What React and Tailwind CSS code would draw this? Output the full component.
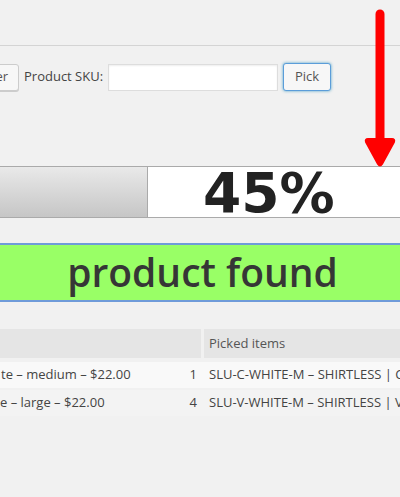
export default function App() {
  const font = { fontFamily: '"Open Sans", "Noto Sans", sans-serif' };
  return (
    <div className="relative w-[400px] h-[497px] overflow-hidden bg-[#f1f1f1] text-[#444]" style={font}>
      <div className="h-[46px] border-b border-[#d4d4d4]"></div>
      <div className="flex items-center h-[30px] mt-[16px] ml-[-39px]">
        <button className="h-[27px] px-[10px] rounded-[3px] border border-[#cccccc] bg-[#f7f7f7] text-[13px] text-[#555] shadow-[0_1px_0_#ccc]">Order</button>
        <span className="ml-[5px] text-[13px] text-[#444]">Product SKU:</span>
        <input className="ml-[5px] w-[170px] h-[27px] bg-white border border-[#dddddd] shadow-[inset_0_1px_2px_rgba(0,0,0,0.07)] outline-none" />
        <button className="ml-[5px] h-[28px] w-[48px] rounded-[3px] border border-[#5b9dd9] bg-[#f7f7f7] text-[13px] text-[#555] shadow-[0_0_3px_rgba(30,140,190,0.8)]">Pick</button>
      </div>
      <div className="mt-[74px] flex h-[52px] border-y border-[#aaaaaa]">
        <div className="w-[148px] border-r border-[#aaaaaa] bg-gradient-to-b from-[#e9e9e9] to-[#c6c6c6]"></div>
        <div className="flex-1 bg-white flex items-center pl-[55px]">
          <span className="text-[55px] font-bold leading-none text-[#222] mt-[2px]" style={{ fontFamily: '"DejaVu Sans", Verdana, sans-serif' }}>45%</span>
        </div>
      </div>
      <div className="mt-[25px] h-[59px] border-y-2 border-[#6f9bd9] bg-[#99ff66] flex items-center justify-center">
        <span className="text-[39px] font-semibold leading-none text-[#363636] mt-[-3px] ml-[5px]">product found</span>
      </div>
      <div className="mt-[27px] text-[13px]">
        <div className="flex h-[29px] gap-[3px]">
          <div className="w-[201px] bg-[#e5e5e5]"></div>
          <div className="flex-1 bg-[#e5e5e5] flex items-center pl-[5px] text-[#555] whitespace-nowrap">Picked items</div>
        </div>
        <div className="flex h-[26px] gap-[3px] mt-[4px] bg-[#f9f9f9]">
          <div className="w-[201px] flex items-center justify-between pr-[4px] whitespace-nowrap overflow-hidden">
            <span className="ml-[1px]">te – medium – $22.00</span>
            <span>1</span>
          </div>
          <div className="flex-1 flex items-center pl-[5px] whitespace-nowrap overflow-hidden">SLU-C-WHITE-M – SHIRTLESS | Crew</div>
        </div>
        <div className="flex h-[26px] gap-[3px] mt-[2px] bg-[#f3f3f3]">
          <div className="w-[201px] flex items-center justify-between pr-[4px] whitespace-nowrap overflow-hidden">
            <span>e – large – $22.00</span>
            <span>4</span>
          </div>
          <div className="flex-1 flex items-center pl-[5px] whitespace-nowrap overflow-hidden">SLU-V-WHITE-M – SHIRTLESS | V-Neck</div>
        </div>
      </div>
      <svg className="absolute left-0 top-0" width="400" height="497" viewBox="0 0 400 497">
        <line x1="380" y1="14" x2="380" y2="142" stroke="#ff0000" strokeWidth="9" strokeLinecap="round" />
        <path d="M368 139 L392 139 Q395 139 394 142 L382 164 Q380 167 378 164 L366 142 Q365 139 368 139 Z" fill="#ff0000" stroke="#ff0000" strokeWidth="2" strokeLinejoin="round" />
      </svg>
    </div>
  );
}
